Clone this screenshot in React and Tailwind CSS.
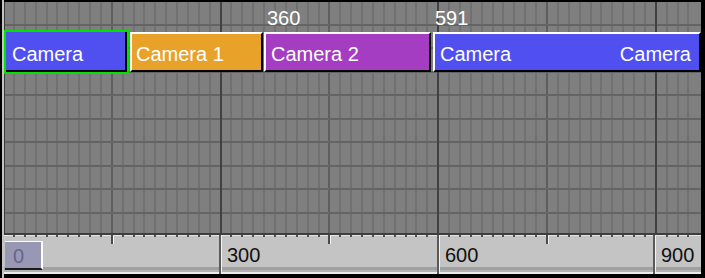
import React from 'react';

// grid local x of minor column k (15 time units each)
const colX = (k) => Math.round(-2 + k * 10.88);
const cols = Array.from({ length: 64 }, (_, k) => k).filter((k) => k > 0);
const rows = Array.from({ length: 9 }, (_, n) => Math.round(22 + n * 23.44));

const clips = [
  { w: 'w-[133px]', bg: 'bg-[#e8a229]', pad: 'pl-[4px]', label: 'Camera 1', gap: 'ml-[1px]' },
  { w: 'w-[167px]', bg: 'bg-[#a43dc1]', pad: 'pl-[5px]', label: 'Camera 2', gap: 'ml-[1px]' },
];

const GridLines = () => (
  <svg className="absolute inset-0" width="697" height="231">
    <rect width="697" height="231" fill="#7f7f7f" />
    {cols.map((k) => (
      <rect
        key={k}
        x={colX(k)}
        y="0"
        width="2"
        height="231"
        fill={k % 20 === 0 ? '#414141' : k % 10 === 0 ? '#5e5e5e' : '#717171'}
      />
    ))}
    {rows.map((y) => (
      <rect key={y} x="0" y={y} width="697" height="2" fill="#646464" />
    ))}
    {cols.filter((k) => k % 20 === 0).map((k) => (
      <rect key={'m' + k} x={colX(k)} y="0" width="2" height="231" fill="#414141" />
    ))}
    <rect x="0" y="0" width="1" height="231" fill="#3a3a3a" />
  </svg>
);

const Ticks = () => (
  <svg className="absolute left-0 top-0" width="697" height="12">
    {cols.filter((k) => k % 20 !== 0).map((k) =>
      k % 10 === 0 ? (
        <g key={k}>
          <rect x={colX(k)} y="2" width="2" height="9" fill="#4a4a4a" />
          <rect x={colX(k) + 2} y="3" width="1" height="8" fill="#f4f4f4" />
        </g>
      ) : (
        <rect key={k} x={colX(k)} y="2" width="2" height="2" fill="#505050" />
      )
    )}
  </svg>
);

const Separator = () => (
  <div className="flex h-full">
    <div className="w-[2px] bg-[#5a5a5a]" />
    <div className="w-[1px] bg-[#f2f2f2]" />
  </div>
);

const Segment = ({ w, children }) => (
  <div className={`relative ${w} h-full flex flex-col`}>
    <div className="h-[1px] bg-[#e6e6e6]" />
    <div className="flex-1 bg-[#c4c4c4] pl-[5px] pt-[9px] text-[#101010]">{children}</div>
    <div className="h-[3px] bg-[#a0a0a0]" />
    <div className="h-[2px] bg-[#b2b2b2]" />
    <div className="h-[2px] bg-[#ececec]" />
  </div>
);

export default function App() {
  return (
    <div className="w-[705px] h-[278px] bg-black flex font-['Liberation_Sans',Arial,sans-serif] text-[20px] leading-[20px]">
      <div className="w-[2px]" />
      <div className="w-[2px] bg-[#c4c4c4]" />
      <div className="w-[697px] flex flex-col pt-[2px]">
        {/* track area */}
        <div className="relative h-[231px]">
          <GridLines />
          <div className="relative flex flex-col">
            <div className="relative h-[28px] text-white">
              <span className="absolute left-[263px] top-[6px]">360</span>
              <span className="absolute left-[431px] top-[6px]">591</span>
            </div>
            <div className="h-[44px] flex items-center text-white">
              <div className="w-[125px] h-[44px] border-2 border-[#00e300]">
                <div className="h-full flex items-center pt-[6px] pl-[6px] border-r-2 border-b-2 border-black bg-[#5050f0]">
                  Camera
                </div>
              </div>
              {clips.map((c) => (
                <div
                  key={c.label}
                  className={`${c.gap} ${c.w} ${c.bg} ${c.pad} h-[40px] flex items-center pt-[4px] border-2 border-t-white border-l-white border-r-black border-b-black`}
                >
                  {c.label}
                </div>
              ))}
              <div className="ml-[2px] w-[268px] h-[40px] flex items-center justify-between pt-[4px] pl-[5px] pr-[8px] bg-[#5050f0] border-2 border-t-white border-l-white border-r-black border-b-black">
                <span>Camera</span>
                <span>Camera</span>
              </div>
            </div>
          </div>
        </div>

        {/* ruler */}
        <div className="relative h-[41px] flex flex-col">
          <div className="h-[2px] bg-[#3e3e3e]" />
          <div className="flex flex-1">
            <Segment w="w-[215px]">
              <div className="absolute left-[1px] top-[6px] w-[38px] h-[29px] bg-[#9898b4] border-t border-t-white border-r-2 border-r-white border-b-2 border-b-[#1a1a1a] pl-[8px] pt-[4px] text-[#66668a]">
                0
              </div>
            </Segment>
            <Separator />
            <Segment w="w-[215px]">300</Segment>
            <Separator />
            <Segment w="w-[213px]">600</Segment>
            <Separator />
            <Segment w="w-[45px]">900</Segment>
          </div>
          <Ticks />
        </div>
      </div>
    </div>
  );
}
